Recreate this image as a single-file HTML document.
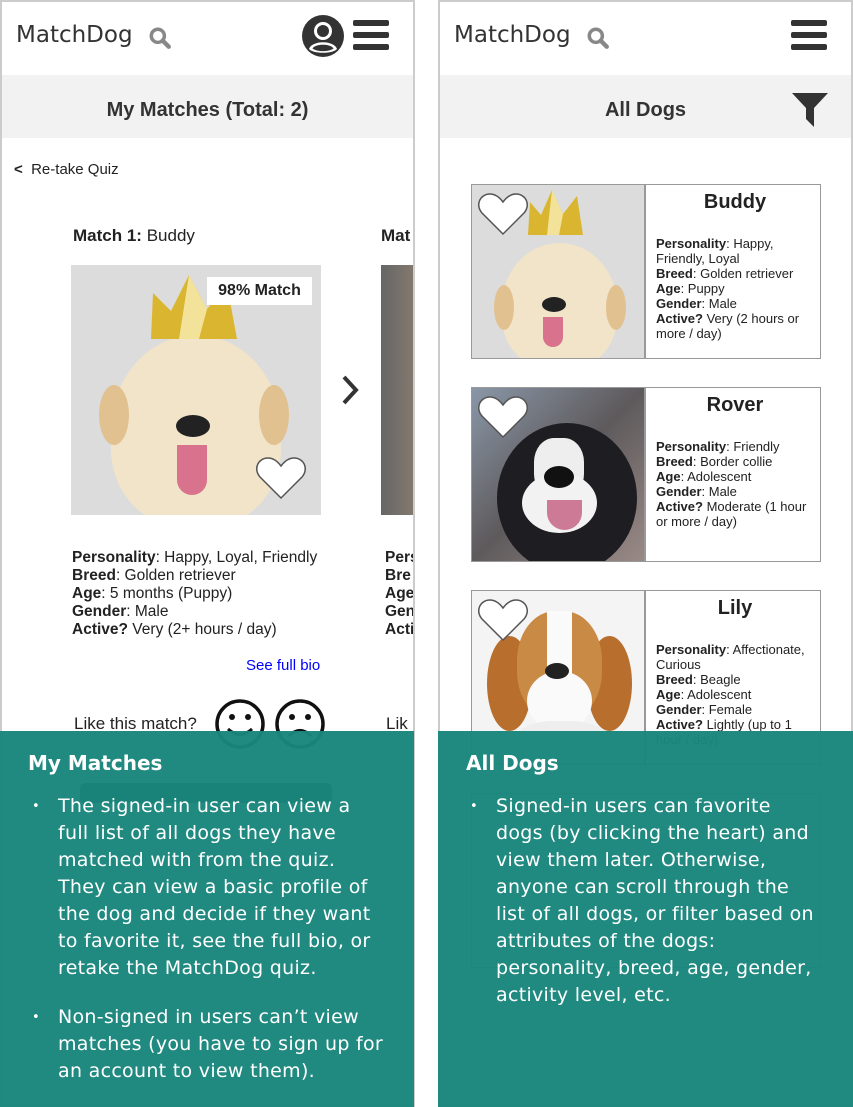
<!DOCTYPE html>
<html><head><meta charset="utf-8"><style>
*{margin:0;padding:0;box-sizing:border-box}
body{width:853px;height:1107px;position:relative;overflow:hidden;background:#fff;font-family:"Liberation Sans",Arial,sans-serif;color:#222}
.panel{position:absolute;top:0;height:1107px;width:415px;border:2px solid #ccc;background:#fff;overflow:hidden}
.abs{position:absolute}
.logo{font-family:"DejaVu Sans","Liberation Sans",sans-serif;font-size:23px;color:#333}
.bar{position:absolute;left:0;right:0;top:73px;height:63px;background:#f2f2f2;font-weight:bold;font-size:20px;text-align:center;line-height:71px;color:#333}
.info{font-size:15.5px;line-height:18px;color:#222}
.card{position:absolute;left:31px;width:350px;border:1.5px solid #999;background:#fff}
.card .img{position:absolute;left:0;top:0;width:174px;height:100%;border-right:2px solid #999;overflow:hidden}
.card .txt{position:absolute;left:184px;top:0;right:6px;font-size:13px;line-height:15px;color:#222}
.card h3{text-align:center;font-size:20px;margin:10px 0 26px;color:#222}
.ov{position:absolute;top:731px;height:376px;background:rgba(26,134,124,0.97);color:#fff;font-family:"DejaVu Sans","Liberation Sans",sans-serif}
.ov h2{font-size:20px;font-weight:bold;position:absolute;top:20px;left:28px}
.ov ul{position:absolute;left:28px;top:62px;list-style:none;font-size:19px;letter-spacing:0.3px;line-height:27px}
.ov li{position:relative;padding-left:30px;margin-bottom:22px}
.ov li:before{content:"•";position:absolute;left:4px;font-size:13px}
</style></head><body>

<div class="panel" style="left:0">
  <div class="abs logo" style="left:14px;top:20px">MatchDog</div>
  <svg class="abs" style="left:146px;top:24px" width="24" height="24" viewBox="0 0 22 22"><circle cx="9" cy="9" r="6" fill="none" stroke="#888" stroke-width="3.2"/><line x1="13.5" y1="13.5" x2="19" y2="19" stroke="#888" stroke-width="4" stroke-linecap="round"/></svg>
  <svg class="abs" style="left:298px;top:11px" width="46" height="46" viewBox="0 0 46 46"><circle cx="23" cy="23" r="21" fill="#333"/><circle cx="23" cy="18" r="9" fill="#fff"/><circle cx="23" cy="18" r="6" fill="#333"/><path d="M9 36 C12 27 34 27 37 36 C33 41 13 41 9 36Z" fill="#fff"/><path d="M12.5 35.5 C15 30.5 31 30.5 33.5 35.5 C29 39 17 39 12.5 35.5Z" fill="#333"/></svg>
  <div class="abs" style="left:351px;top:18px;width:36px;height:6px;background:#333;border-radius:2px"></div>
  <div class="abs" style="left:351px;top:30px;width:36px;height:6px;background:#333;border-radius:2px"></div>
  <div class="abs" style="left:351px;top:42px;width:36px;height:6px;background:#333;border-radius:2px"></div>
  <div class="bar">My Matches (Total: 2)</div>
  <div class="abs" style="left:12px;top:159px;font-size:15px"><b>&lt;</b>&nbsp; Re-take Quiz</div>
  <div class="abs" style="left:71px;top:224px;font-size:17px"><b>Match 1:</b> Buddy</div>
  <div class="abs" style="left:379px;top:224px;font-size:17px"><b>Mat</b></div>
  <div class="abs" style="left:69px;top:263px;width:250px;height:250px;background:#dcdcdc;overflow:hidden">
    <div class="abs" style="left:40px;top:70px;width:170px;height:190px;border-radius:50% 50% 40% 40%;background:#f1e4c8"></div>
    <div class="abs" style="left:28px;top:120px;width:30px;height:60px;border-radius:50%;background:#e2c190"></div>
    <div class="abs" style="left:188px;top:120px;width:30px;height:60px;border-radius:50%;background:#e2c190"></div>
    <svg class="abs" style="left:78px;top:10px" width="95" height="65"><path d="M2 64 L4 18 L22 36 L40 0 L58 34 L78 10 L88 64Z" fill="#d9b530"/><path d="M40 0 L58 34 L50 64 L30 64Z" fill="#f3e39a"/></svg>
    <div class="abs" style="left:105px;top:150px;width:34px;height:22px;border-radius:50%;background:#222"></div>
    <div class="abs" style="left:106px;top:180px;width:30px;height:50px;border-radius:0 0 15px 15px;background:#d9728c"></div>
    <div class="abs" style="left:136px;top:12px;width:105px;height:28px;background:#fff;font-weight:bold;font-size:16px;text-align:center;line-height:28px">98% Match</div>
    <svg class="abs" style="left:184px;top:190px" width="52" height="46" viewBox="0 0 52 46"><path d="M26 43 L5 22 C-2 14 3 3 13 3 C19 3 23 7 26 11 C29 7 33 3 39 3 C49 3 54 14 47 22Z" fill="#fff" stroke="#555" stroke-width="1.5"/></svg>
  </div>
  <svg class="abs" style="left:338px;top:372px" width="20" height="32"><path d="M4 3 L16 16 L4 29" fill="none" stroke="#333" stroke-width="4"/></svg>
  <div class="abs" style="left:379px;top:263px;width:40px;height:250px;background:linear-gradient(90deg,#666,#8a7d70)"></div>
  <div class="abs info" style="left:70px;top:547px"><b>Personality</b>: Happy, Loyal, Friendly<br><b>Breed</b>: Golden retriever<br><b>Age</b>: 5 months (Puppy)<br><b>Gender</b>: Male<br><b>Active?</b> Very (2+ hours / day)</div>
  <div class="abs info" style="left:383px;top:547px"><b>Pers<br>Bre<br>Age<br>Gen<br>Acti</b></div>
  <div class="abs" style="left:244px;top:655px;font-size:15px;color:#00f">See full bio</div>
  <div class="abs" style="left:72px;top:712px;font-size:17px">Like this match?</div>
  <div class="abs" style="left:384px;top:712px;font-size:17px">Lik</div>
  <svg class="abs" style="left:212px;top:696px" width="112" height="52" viewBox="0 0 112 52"><circle cx="26" cy="26" r="23" fill="none" stroke="#111" stroke-width="3.5"/><circle cx="18" cy="19" r="3" fill="#111"/><circle cx="34" cy="19" r="3" fill="#111"/><path d="M14 31 Q26 42 38 31" fill="none" stroke="#111" stroke-width="3"/><circle cx="86" cy="26" r="23" fill="none" stroke="#111" stroke-width="3.5"/><circle cx="78" cy="19" r="3" fill="#111"/><circle cx="94" cy="19" r="3" fill="#111"/><path d="M75 38 Q86 27 97 38" fill="none" stroke="#111" stroke-width="3"/></svg>
  <div class="abs" style="left:78px;top:781px;width:252px;height:20px;background:#333;border-radius:5px"></div>
</div>

<div class="panel" style="left:438px">
  <div class="abs logo" style="left:14px;top:20px">MatchDog</div>
  <svg class="abs" style="left:146px;top:24px" width="24" height="24" viewBox="0 0 22 22"><circle cx="9" cy="9" r="6" fill="none" stroke="#888" stroke-width="3.2"/><line x1="13.5" y1="13.5" x2="19" y2="19" stroke="#888" stroke-width="4" stroke-linecap="round"/></svg>
  <div class="abs" style="left:351px;top:18px;width:36px;height:6px;background:#333;border-radius:2px"></div>
  <div class="abs" style="left:351px;top:30px;width:36px;height:6px;background:#333;border-radius:2px"></div>
  <div class="abs" style="left:351px;top:42px;width:36px;height:6px;background:#333;border-radius:2px"></div>
  <div class="bar">All Dogs</div>
  <svg class="abs" style="left:351px;top:90px" width="38" height="36"><path d="M1 1 H37 L23 16 V35 L15 27 V16Z" fill="#333"/></svg>

  <div class="card" style="top:182px;height:175px">
    <div class="img" style="background:#dcdcdc">
      <div class="abs" style="left:30px;top:58px;width:115px;height:125px;border-radius:50% 50% 40% 40%;background:#f1e4c8"></div>
      <div class="abs" style="left:22px;top:100px;width:20px;height:45px;border-radius:50%;background:#e2c190"></div>
      <div class="abs" style="left:134px;top:100px;width:20px;height:45px;border-radius:50%;background:#e2c190"></div>
      <svg class="abs" style="left:55px;top:5px" width="60" height="46"><path d="M1 45 L3 12 L14 25 L25 0 L36 24 L50 6 L56 45Z" fill="#d9b530"/><path d="M25 0 L36 24 L32 45 L20 45Z" fill="#f3e39a"/></svg>
      <div class="abs" style="left:70px;top:112px;width:24px;height:15px;border-radius:50%;background:#222"></div>
      <div class="abs" style="left:71px;top:132px;width:20px;height:30px;border-radius:0 0 10px 10px;background:#d9728c"></div>
      <svg class="abs" style="left:5px;top:6px" width="52" height="46" viewBox="0 0 52 46"><path d="M26 43 L5 22 C-2 14 3 3 13 3 C19 3 23 7 26 11 C29 7 33 3 39 3 C49 3 54 14 47 22Z" fill="#fff" stroke="#555" stroke-width="1.5"/></svg>
    </div>
    <div class="txt"><h3>Buddy</h3><b>Personality</b>: Happy, Friendly, Loyal<br><b>Breed</b>: Golden retriever<br><b>Age</b>: Puppy<br><b>Gender</b>: Male<br><b>Active?</b> Very (2 hours or more / day)</div>
  </div>

  <div class="card" style="top:385px;height:175px">
    <div class="img" style="background:linear-gradient(135deg,#8a97a8,#5e5a5c 50%,#9a8a86)">
      <div class="abs" style="left:25px;top:35px;width:140px;height:150px;border-radius:50%;background:#1d1d22"></div>
      <div class="abs" style="left:62px;top:50px;width:50px;height:60px;border-radius:40%;background:#eee"></div>
      <div class="abs" style="left:50px;top:85px;width:75px;height:60px;border-radius:50%;background:#f2f2f2"></div>
      <div class="abs" style="left:72px;top:78px;width:30px;height:22px;border-radius:50%;background:#111"></div>
      <div class="abs" style="left:75px;top:112px;width:35px;height:30px;border-radius:0 0 20px 20px;background:#cc7a96"></div>
      <svg class="abs" style="left:5px;top:6px" width="52" height="46" viewBox="0 0 52 46"><path d="M26 43 L5 22 C-2 14 3 3 13 3 C19 3 23 7 26 11 C29 7 33 3 39 3 C49 3 54 14 47 22Z" fill="#fff" stroke="#555" stroke-width="1.5"/></svg>
    </div>
    <div class="txt"><h3>Rover</h3><b>Personality</b>: Friendly<br><b>Breed</b>: Border collie<br><b>Age</b>: Adolescent<br><b>Gender</b>: Male<br><b>Active?</b> Moderate (1 hour or more / day)</div>
  </div>

  <div class="card" style="top:588px;height:175px">
    <div class="img" style="background:#f4f4f4">
      <div class="abs" style="left:15px;top:45px;width:45px;height:95px;border-radius:50%;background:#b86f2e"></div>
      <div class="abs" style="left:115px;top:45px;width:45px;height:95px;border-radius:50%;background:#b86f2e"></div>
      <div class="abs" style="left:45px;top:20px;width:85px;height:110px;border-radius:45%;background:#c98a45"></div>
      <div class="abs" style="left:75px;top:20px;width:25px;height:110px;background:#fafafa"></div>
      <div class="abs" style="left:55px;top:80px;width:65px;height:60px;border-radius:50%;background:#fafafa"></div>
      <div class="abs" style="left:40px;top:130px;width:100px;height:60px;border-radius:40%;background:#eee"></div>
      <div class="abs" style="left:73px;top:72px;width:24px;height:16px;border-radius:50%;background:#222"></div>
      <svg class="abs" style="left:5px;top:6px" width="52" height="46" viewBox="0 0 52 46"><path d="M26 43 L5 22 C-2 14 3 3 13 3 C19 3 23 7 26 11 C29 7 33 3 39 3 C49 3 54 14 47 22Z" fill="#fff" stroke="#555" stroke-width="1.5"/></svg>
    </div>
    <div class="txt"><h3>Lily</h3><b>Personality</b>: Affectionate, Curious<br><b>Breed</b>: Beagle<br><b>Age</b>: Adolescent<br><b>Gender</b>: Female<br><b>Active?</b> Lightly (up to 1 hour / day)</div>
  </div>
  <div class="card" style="top:791px;height:175px"></div>
</div>

<div class="ov" style="left:0;width:414px">
  <h2>My Matches</h2>
  <ul style="width:360px">
    <li>The signed-in user can view a<br>full list of all dogs they have<br>matched with from the quiz.<br>They can view a basic profile of<br>the dog and decide if they want<br>to favorite it, see the full bio, or<br>retake the MatchDog quiz.</li>
    <li>Non-signed in users can’t view<br>matches (you have to sign up for<br>an account to view them).</li>
  </ul>
</div>
<div class="ov" style="left:438px;width:415px">
  <h2>All Dogs</h2>
  <ul style="width:380px">
    <li>Signed-in users can favorite<br>dogs (by clicking the heart) and<br>view them later. Otherwise,<br>anyone can scroll through the<br>list of all dogs, or filter based on<br>attributes of the dogs:<br>personality, breed, age, gender,<br>activity level, etc.</li>
  </ul>
</div>
</body></html>
